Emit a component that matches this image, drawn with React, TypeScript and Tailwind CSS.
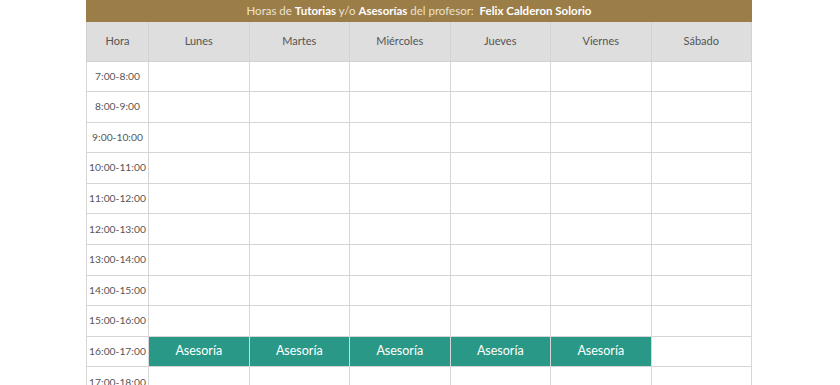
import React from 'react';

const days = ['Lunes', 'Martes', 'Miércoles', 'Jueves', 'Viernes', 'Sábado'];
const hours = [
  '7:00-8:00',
  '8:00-9:00',
  '9:00-10:00',
  '10:00-11:00',
  '11:00-12:00',
  '12:00-13:00',
  '13:00-14:00',
  '14:00-15:00',
  '15:00-16:00',
  '16:00-17:00',
  '17:00-18:00',
];

// hora -> dias marcados como asesoría
const asesorias: Record<string, string[]> = {
  '16:00-17:00': ['Lunes', 'Martes', 'Miércoles', 'Jueves', 'Viernes'],
};

const App = () => {
  return (
    <div className="w-[840px] h-[385px] overflow-hidden bg-white" style={{ fontFamily: 'Lato, "Open Sans", sans-serif' }}>
      <div className="ml-[86px] w-[666px]">
        <div className="h-[22px] bg-[#9b7d47] flex items-center justify-center text-[11.5px] text-[#ece3d2]">
          Horas de&nbsp;<b className="text-white font-bold">Tutorias</b>&nbsp;y/o&nbsp;<b className="text-white font-bold">Asesorías</b>&nbsp;del profesor:&nbsp;&nbsp;<b className="text-white font-bold">Felix Calderon Solorio</b>
        </div>
        <table className="w-full border-collapse table-fixed text-[11px] text-[#555]">
          <colgroup>
            <col className="w-[62px]" />
            {days.map((d) => (
              <col key={d} />
            ))}
          </colgroup>
          <thead>
            <tr className="h-[39px] bg-[#dedede]">
              <th className="font-normal border border-[#d2d2d2] border-t-0">Hora</th>
              {days.map((d) => (
                <th key={d} className="font-normal border border-[#d2d2d2] border-t-0">{d}</th>
              ))}
            </tr>
          </thead>
          <tbody>
            {hours.map((h) => (
              <tr key={h} className="h-[30.6px]">
                <td className="text-center text-[10.3px] border border-[#d6d6d6] p-0 whitespace-nowrap">{h}</td>
                {days.map((d) => {
                  const on = asesorias[h]?.includes(d);
                  return (
                    <td
                      key={d}
                      className={
                        on
                          ? 'border border-[#d6d6d6] bg-[#2a9886] text-white text-center text-[12.5px] p-0'
                          : 'border border-[#d6d6d6] p-0'
                      }
                    >
                      {on ? 'Asesoría' : ''}
                    </td>
                  );
                })}
              </tr>
            ))}
          </tbody>
        </table>
      </div>
    </div>
  );
};

export default App;
